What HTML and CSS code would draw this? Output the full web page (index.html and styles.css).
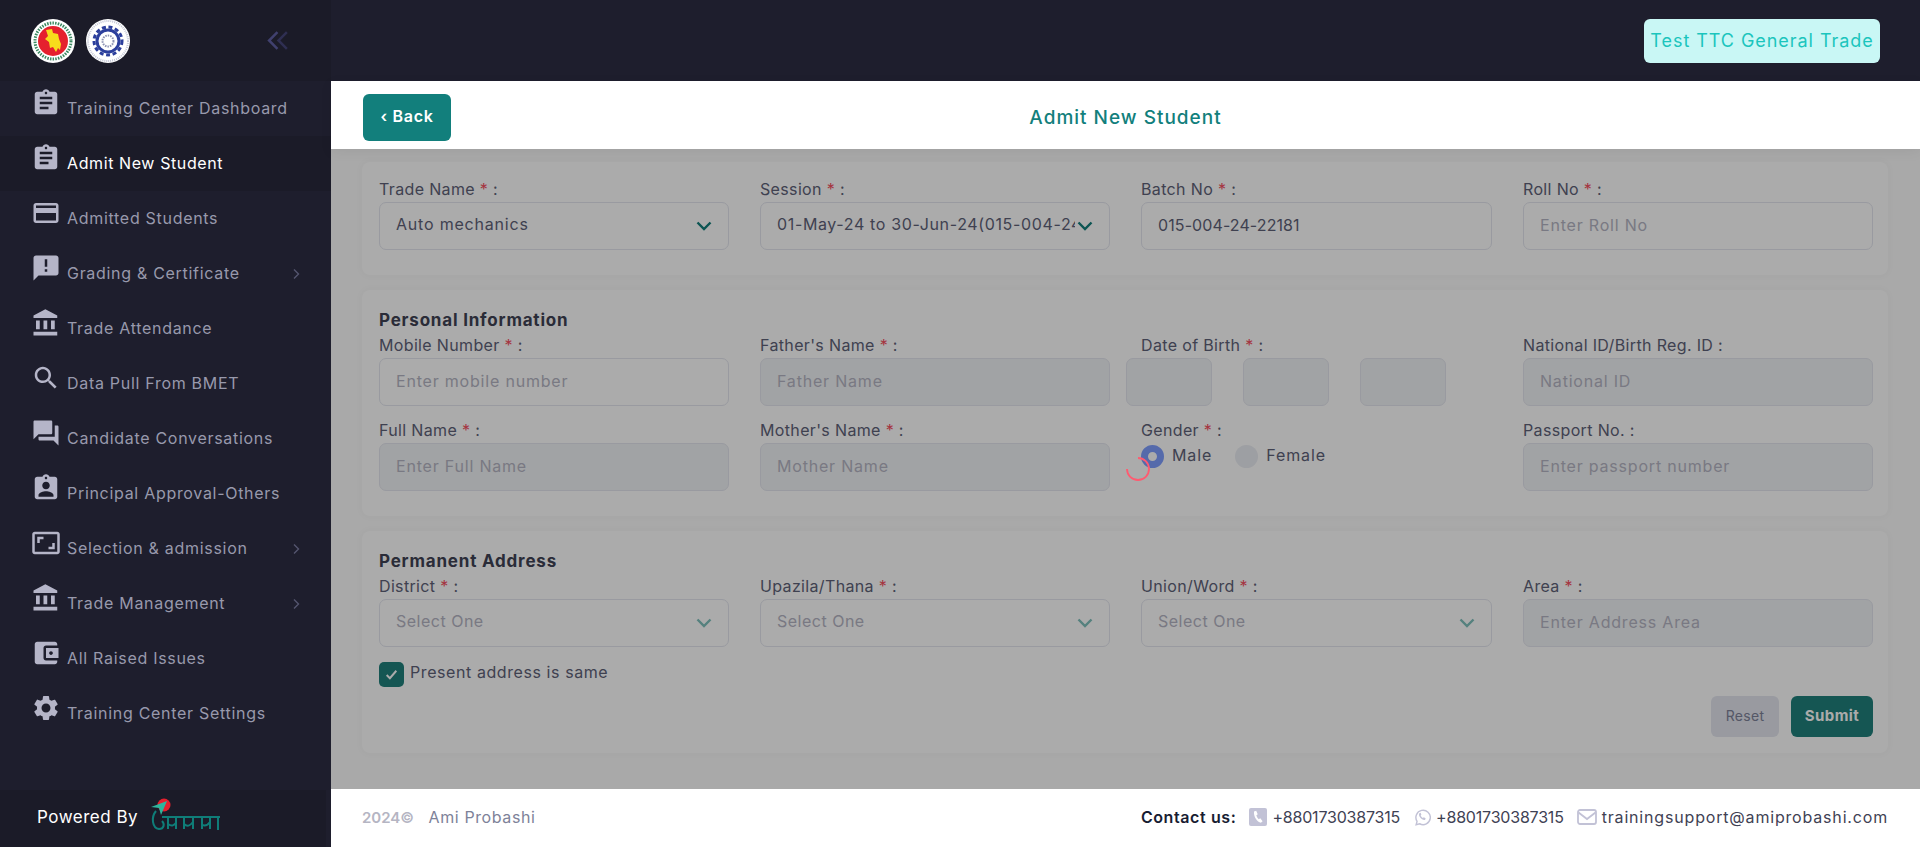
FILE: index.html
```html
<!DOCTYPE html>
<html lang="en">
<head>
    <meta charset="UTF-8">
    <meta name="viewport" content="width=device-width, initial-scale=1.0">
    <title>Admit New Student</title>
    <link rel="stylesheet" href="styles.css">
</head>
<body>
    <div class="app">
        <aside class="sidebar">
            <div class="brand">
                <svg class="seal" viewBox="0 0 44 44">
                    <circle cx="22" cy="22" r="22" fill="#fff"/>
                    <circle cx="22" cy="22" r="18" fill="none" stroke="#3c8a62" stroke-width="3" stroke-dasharray="1.5 1.2"/>
                    <circle cx="22" cy="22" r="15" fill="#e5202e"/>
                    <path d="M15 11l6-1 1 4 5 1 1 5 2 5-1 6-2-2-2 4-3-5-3 1-1-6-4-3 3-3z" fill="#f7dc1c"/>
                </svg>
                <svg class="seal" viewBox="0 0 44 44">
                    <circle cx="22" cy="22" r="22" fill="#fff"/>
                    <circle cx="22" cy="22" r="20" fill="none" stroke="#c3c6d6" stroke-width="2" stroke-dasharray="1 1"/>
                    <circle cx="22" cy="22" r="14" fill="none" stroke="#2c3f9c" stroke-width="3" stroke-dasharray="4 2.6"/>
                    <circle cx="22" cy="22" r="11" fill="none" stroke="#2c3f9c" stroke-width="3"/>
                    <circle cx="22" cy="22" r="5.5" fill="none" stroke="#8d93b3" stroke-width="2" stroke-dasharray="1.5 1"/>
                </svg>
                <svg class="collapse" viewBox="0 0 22 20">
                    <path d="M10 2L2 10l8 8" fill="none" stroke="#40406e" stroke-width="2.4"/>
                    <path d="M19 2l-8 8 8 8" fill="none" stroke="#2f2f52" stroke-width="2.4"/>
                </svg>
            </div>
            <nav class="menu">
                <a class="menu-item" href="#">
                    <svg class="menu-icon" viewBox="0 0 24 24"><path d="M19 3h-4.18C14.4 1.84 13.3 1 12 1c-1.3 0-2.4.84-2.82 2H5c-1.1 0-2 .9-2 2v14c0 1.1.9 2 2 2h14c1.1 0 2-.9 2-2V5c0-1.1-.9-2-2-2zm-7 0c.55 0 1 .45 1 1s-.45 1-1 1-1-.45-1-1 .45-1 1-1zm2 14H7v-2h7v2zm3-4H7v-2h10v2zm0-4H7V7h10v2z"/></svg>
                    <span>Training Center Dashboard</span>
                </a>
                <a class="menu-item active" href="#">
                    <svg class="menu-icon" viewBox="0 0 24 24"><path d="M19 3h-4.18C14.4 1.84 13.3 1 12 1c-1.3 0-2.4.84-2.82 2H5c-1.1 0-2 .9-2 2v14c0 1.1.9 2 2 2h14c1.1 0 2-.9 2-2V5c0-1.1-.9-2-2-2zm-7 0c.55 0 1 .45 1 1s-.45 1-1 1-1-.45-1-1 .45-1 1-1zm2 14H7v-2h7v2zm3-4H7v-2h10v2zm0-4H7V7h10v2z"/></svg>
                    <span>Admit New Student</span>
                </a>
                <a class="menu-item" href="#">
                    <svg class="menu-icon" viewBox="0 0 24 24"><path d="M20 4H4c-1.11 0-1.99.89-1.99 2L2 18c0 1.11.89 2 2 2h16c1.11 0 2-.89 2-2V6c0-1.11-.89-2-2-2zm0 14H4v-6h16v6zm0-10H4V6h16v2z"/></svg>
                    <span>Admitted Students</span>
                </a>
                <a class="menu-item" href="#">
                    <svg class="menu-icon" viewBox="0 0 24 24"><path d="M20 2H4c-1.1 0-1.99.9-1.99 2L2 22l4-4h14c1.1 0 2-.9 2-2V4c0-1.1-.9-2-2-2zm-7 9h-2V5h2v6zm0 4h-2v-2h2v2z"/></svg>
                    <span>Grading &amp; Certificate</span>
                    <svg class="menu-arrow" viewBox="0 0 8 12"><path d="M2 1.5L6.5 6 2 10.5"/></svg>
                </a>
                <a class="menu-item" href="#">
                    <svg class="menu-icon" viewBox="0 0 24 24"><path d="M4 10v7h3v-7H4zm6 0v7h3v-7h-3zM2 22h19v-3H2v3zm14-12v7h3v-7h-3zm-4.5-9L2 6v2h19V6l-9.5-5z"/></svg>
                    <span>Trade Attendance</span>
                </a>
                <a class="menu-item" href="#">
                    <svg class="menu-icon" viewBox="0 0 24 24"><path d="M15.5 14h-.79l-.28-.27C15.41 12.59 16 11.11 16 9.5 16 5.91 13.09 3 9.5 3S3 5.91 3 9.5 5.91 16 9.5 16c1.61 0 3.09-.59 4.23-1.57l.27.28v.79l5 4.99L20.49 19l-4.99-5zm-6 0C7.01 14 5 11.99 5 9.5S7.01 5 9.5 5 14 7.01 14 9.5 11.99 14 9.5 14z"/></svg>
                    <span>Data Pull From BMET</span>
                </a>
                <a class="menu-item" href="#">
                    <svg class="menu-icon" viewBox="0 0 24 24"><path d="M21 6h-2v9H6v2c0 .55.45 1 1 1h11l4 4V7c0-.55-.45-1-1-1zm-4 6V3c0-.55-.45-1-1-1H3c-.55 0-1 .45-1 1v14l4-4h10c.55 0 1-.45 1-1z"/></svg>
                    <span>Candidate Conversations</span>
                </a>
                <a class="menu-item" href="#">
                    <svg class="menu-icon" viewBox="0 0 24 24"><path d="M19 3h-4.18C14.4 1.84 13.3 1 12 1c-1.3 0-2.4.84-2.82 2H5c-1.1 0-2 .9-2 2v14c0 1.1.9 2 2 2h14c1.1 0 2-.9 2-2V5c0-1.1-.9-2-2-2zm-7 0c.55 0 1 .45 1 1s-.45 1-1 1-1-.45-1-1 .45-1 1-1zm0 4c1.66 0 3 1.34 3 3s-1.34 3-3 3-3-1.34-3-3 1.34-3 3-3zm6 12H6v-1.4c0-2 4-3.1 6-3.1s6 1.1 6 3.1V19z"/></svg>
                    <span>Principal Approval-Others</span>
                </a>
                <a class="menu-item" href="#">
                    <svg class="menu-icon" viewBox="0 0 24 24"><path d="M19 12h-2v3h-3v2h5v-5zM7 9h3V7H5v5h2V9zm14-6H3c-1.1 0-2 .9-2 2v14c0 1.1.9 2 2 2h18c1.1 0 2-.9 2-2V5c0-1.1-.9-2-2-2zm0 16.01H3V4.99h18v14.02z"/></svg>
                    <span>Selection &amp; admission</span>
                    <svg class="menu-arrow" viewBox="0 0 8 12"><path d="M2 1.5L6.5 6 2 10.5"/></svg>
                </a>
                <a class="menu-item" href="#">
                    <svg class="menu-icon" viewBox="0 0 24 24"><path d="M4 10v7h3v-7H4zm6 0v7h3v-7h-3zM2 22h19v-3H2v3zm14-12v7h3v-7h-3zm-4.5-9L2 6v2h19V6l-9.5-5z"/></svg>
                    <span>Trade Management</span>
                    <svg class="menu-arrow" viewBox="0 0 8 12"><path d="M2 1.5L6.5 6 2 10.5"/></svg>
                </a>
                <a class="menu-item" href="#">
                    <svg class="menu-icon" viewBox="0 0 24 24"><path d="M21 18v1c0 1.1-.9 2-2 2H5c-1.11 0-2-.9-2-2V5c0-1.1.89-2 2-2h14c1.1 0 2 .9 2 2v1h-9c-1.11 0-2 .9-2 2v8c0 1.1.89 2 2 2h9zm-9-2h10V8H12v8zm4-2.5c-.83 0-1.5-.67-1.5-1.5s.67-1.5 1.5-1.5 1.5.67 1.5 1.5-.67 1.5-1.5 1.5z"/></svg>
                    <span>All Raised Issues</span>
                </a>
                <a class="menu-item" href="#">
                    <svg class="menu-icon" viewBox="0 0 24 24"><path d="M19.14 12.94c.04-.3.06-.61.06-.94 0-.32-.02-.64-.07-.94l2.03-1.58c.18-.14.23-.41.12-.61l-1.92-3.32c-.12-.22-.37-.29-.59-.22l-2.39.96c-.5-.38-1.03-.7-1.62-.94l-.36-2.54c-.04-.24-.24-.41-.48-.41h-3.84c-.24 0-.43.17-.47.41l-.36 2.54c-.59.24-1.13.57-1.62.94l-2.39-.96c-.22-.08-.47 0-.59.22L2.74 8.87c-.12.21-.08.47.12.61l2.03 1.58c-.05.3-.09.63-.09.94s.02.64.07.94l-2.03 1.58c-.18.14-.23.41-.12.61l1.92 3.32c.12.22.37.29.59.22l2.39-.96c.5.38 1.03.7 1.62.94l.36 2.54c.05.24.24.41.48.41h3.84c.24 0 .44-.17.47-.41l.36-2.54c.59-.24 1.13-.56 1.62-.94l2.39.96c.22.08.47 0 .59-.22l1.92-3.32c.12-.22.07-.47-.12-.61l-2.01-1.58zM12 15.6c-1.98 0-3.6-1.62-3.6-3.6s1.62-3.6 3.6-3.6 3.6 1.62 3.6 3.6-1.62 3.6-3.6 3.6z"/></svg>
                    <span>Training Center Settings</span>
                </a>
            </nav>
            <div class="powered">
                <span>Powered By</span>
                <svg class="powered-logo" viewBox="0 0 70 38">
                    <circle cx="14" cy="7" r="6.5" fill="#e5202e"/>
                    <path d="M1 9l16-6-6 14-2-7z" fill="#2fb59d"/>
                    <g fill="none" stroke="#0f7d78" stroke-width="2">
                        <path d="M6 13c-5 6-4 17 3 18 5 0 6-5 3-8"/>
                        <path d="M12 19h58"/>
                        <path d="M18 19v12M26 19v12M34 19v12M43 19v12M52 19v12M60 19v12M68 19v13"/>
                        <path d="M18 26c4 3 6 1 8-1M34 26c3 3 6 2 9-2M52 27c3 1 6 0 8-3"/>
                    </g>
                </svg>
            </div>
        </aside>

        <div class="main">
            <header class="topbar">
                <div class="center-badge">Test TTC General Trade</div>
            </header>

            <div class="page-head">
                <a class="back-btn" href="#">&lsaquo; Back</a>
                <h1>Admit New Student</h1>
            </div>

            <main class="content">
                <section class="card">
                    <div class="form-grid">
                        <div class="field">
                            <label>Trade Name <i>*</i> :</label>
                            <div class="select-wrap">
                                <select class="control"><option>Auto mechanics</option></select>
                                <svg class="chevron" viewBox="0 0 16 10"><path d="M1.5 1.5L8 8l6.5-6.5"/></svg>
                            </div>
                        </div>
                        <div class="field">
                            <label>Session <i>*</i> :</label>
                            <div class="select-wrap">
                                <select class="control session"><option>01-May-24 to 30-Jun-24(015-004-24-22181)</option></select>
                                <svg class="chevron" viewBox="0 0 16 10"><path d="M1.5 1.5L8 8l6.5-6.5"/></svg>
                            </div>
                        </div>
                        <div class="field">
                            <label>Batch No <i>*</i> :</label>
                            <input class="control numeric" type="text" value="015-004-24-22181">
                        </div>
                        <div class="field">
                            <label>Roll No <i>*</i> :</label>
                            <input class="control" type="text" placeholder="Enter Roll No">
                        </div>
                    </div>
                </section>

                <section class="card">
                    <h2>Personal Information</h2>
                    <div class="form-grid">
                        <div class="field">
                            <label>Mobile Number <i>*</i> :</label>
                            <input class="control" type="text" placeholder="Enter mobile number">
                        </div>
                        <div class="field">
                            <label>Father's Name <i>*</i> :</label>
                            <input class="control locked" type="text" placeholder="Father Name">
                        </div>
                        <div class="field">
                            <label>Date of Birth <i>*</i> :</label>
                            <div class="dob">
                                <input class="control locked" type="text">
                                <input class="control locked" type="text">
                                <input class="control locked" type="text">
                            </div>
                        </div>
                        <div class="field">
                            <label>National ID/Birth Reg. ID :</label>
                            <input class="control locked" type="text" placeholder="National ID">
                        </div>
                        <div class="field">
                            <label>Full Name <i>*</i> :</label>
                            <input class="control locked" type="text" placeholder="Enter Full Name">
                        </div>
                        <div class="field">
                            <label>Mother's Name <i>*</i> :</label>
                            <input class="control locked" type="text" placeholder="Mother Name">
                        </div>
                        <div class="field">
                            <label>Gender <i>*</i> :</label>
                            <div class="radios">
                                <label class="radio"><input type="radio" name="gender" checked> Male</label>
                                <label class="radio"><input type="radio" name="gender"> Female</label>
                            </div>
                        </div>
                        <div class="field">
                            <label>Passport No. :</label>
                            <input class="control locked" type="text" placeholder="Enter passport number">
                        </div>
                    </div>
                </section>

                <section class="card">
                    <h2>Permanent Address</h2>
                    <div class="form-grid">
                        <div class="field">
                            <label>District <i>*</i> :</label>
                            <div class="select-wrap">
                                <select class="control empty"><option>Select One</option></select>
                                <svg class="chevron faint" viewBox="0 0 16 10"><path d="M1.5 1.5L8 8l6.5-6.5"/></svg>
                            </div>
                        </div>
                        <div class="field">
                            <label>Upazila/Thana <i>*</i> :</label>
                            <div class="select-wrap">
                                <select class="control empty"><option>Select One</option></select>
                                <svg class="chevron faint" viewBox="0 0 16 10"><path d="M1.5 1.5L8 8l6.5-6.5"/></svg>
                            </div>
                        </div>
                        <div class="field">
                            <label>Union/Word <i>*</i> :</label>
                            <div class="select-wrap">
                                <select class="control empty"><option>Select One</option></select>
                                <svg class="chevron faint" viewBox="0 0 16 10"><path d="M1.5 1.5L8 8l6.5-6.5"/></svg>
                            </div>
                        </div>
                        <div class="field">
                            <label>Area <i>*</i> :</label>
                            <input class="control locked" type="text" placeholder="Enter Address Area">
                        </div>
                    </div>
                    <label class="same-address">
                        <span class="checkbox">
                            <svg viewBox="0 0 14 14"><path d="M2.5 7.5L5.5 10.5 11.5 3.5"/></svg>
                        </span>
                        Present address is same
                    </label>
                    <div class="form-actions">
                        <button class="btn-reset" type="button">Reset</button>
                        <button class="btn-submit" type="button">Submit</button>
                    </div>
                </section>

                <div class="overlay"></div>
                <svg class="spinner" viewBox="0 0 26 26"><path d="M13 2a11 11 0 1 1-11 11"/></svg>
            </main>

            <footer class="footer">
                <div class="copy"><b>2024&copy;</b> <span>Ami Probashi</span></div>
                <div class="contact">
                    <b>Contact us:</b>
                    <span class="contact-item">
                        <svg class="contact-icon" viewBox="0 0 18 18"><rect width="18" height="18" rx="2" fill="#c2c2d6"/><path d="M5 3.5l2.2-.7 1.5 3.4-1.4 1.2c.5 1.500 1.300 2.800 2.400 3.800l1.600-.9 2.300 2.900-1.700 1.600c-3.700-.5-7.500-6.300-6.900-11.300z" fill="#fff"/></svg>
                        +8801730387315
                    </span>
                    <span class="contact-item">
                        <svg class="contact-icon" viewBox="0 0 18 20"><path d="M2.5 18.500l1-3.700A8 8 0 1 1 6.400 17.500z" fill="none" stroke="#c2c2d6" stroke-width="1.6"/><path d="M6.5 5.500c-1.500 1-1 3 .5 5s4 3.500 5.500 2.500l.5-1.500-2-1.200-1 .8c-1-.5-2-1.700-2.500-2.800l.8-.9-.8-2.100z" fill="#c2c2d6"/></svg>
                        +8801730387315
                    </span>
                    <span class="contact-item email">
                        <svg class="contact-icon mail" viewBox="0 0 20 16"><rect x="1" y="1" width="18" height="14" rx="2" fill="none" stroke="#c2c2d6" stroke-width="1.8"/><path d="M1.5 3.500L10 10l8.500-6.500" fill="none" stroke="#c2c2d6" stroke-width="1.8"/></svg>
                        trainingsupport@amiprobashi.com
                    </span>
                </div>
            </footer>
        </div>
    </div>
</body>
</html>
```

FILE: styles.css
```css
/* General */
* {
    box-sizing: border-box;
}

body {
    margin: 0;
    font-family: Inter, "Noto Sans", sans-serif;
    font-size: 16px;
    color: #3f4254;
    background-color: #fff;
}

.app {
    display: flex;
    height: 847px;
    overflow: hidden;
}

/* Sidebar */
.sidebar {
    width: 331px;
    flex-shrink: 0;
    display: flex;
    flex-direction: column;
    background-color: #1e1e2d;
}

.brand {
    height: 81px;
    padding-left: 31px;
    display: flex;
    align-items: center;
    gap: 11px;
    background-color: #1b1b28;
}

.seal {
    width: 44px;
    height: 44px;
}

.collapse {
    width: 23px;
    height: 21px;
    margin-left: 126px;
}

.menu {
    flex: 1;
}

.menu-item {
    height: 55px;
    padding: 7px 31px 0 31px;
    display: flex;
    align-items: flex-start;
    color: #9899ac;
    text-decoration: none;
    font-size: 16px;
    letter-spacing: 0.7px;
}

.menu-item.active {
    background-color: #1b1b28;
    color: #fff;
    letter-spacing: 0.6px;
}

.menu-item span {
    margin: 8px 0 0 6px;
    line-height: 24px;
}

.menu-icon {
    width: 30px;
    height: 30px;
    flex-shrink: 0;
    fill: #b5b5c8;
}

.menu-arrow {
    width: 8px;
    height: 12px;
    margin: 15px 0 0 auto;
    fill: none;
    stroke: #55566f;
    stroke-width: 1.4;
}

.powered {
    width: 326px;
    height: 57px;
    padding: 0 0 3px 37px;
    display: flex;
    align-items: center;
    gap: 12px;
    background-color: #1b1b28;
    color: #fff;
    font-size: 17px;
    letter-spacing: 0.5px;
}

.powered-logo {
    width: 70px;
    height: 38px;
}

/* Right side */
.main {
    flex: 1;
    display: flex;
    flex-direction: column;
    min-width: 0;
}

.topbar {
    height: 81px;
    padding: 19px 40px 0 0;
    display: flex;
    justify-content: flex-end;
    align-items: flex-start;
    background-color: #1e1e2d;
}

.center-badge {
    width: 236px;
    height: 44px;
    line-height: 44px;
    text-align: center;
    border-radius: 6px;
    background-color: #c9f7f5;
    color: #1bc5bd;
    font-size: 18px;
    letter-spacing: 0.95px;
    white-space: nowrap;
}

.page-head {
    position: relative;
    z-index: 1;
    height: 68px;
    padding: 13px 32px 0;
    display: grid;
    grid-template-columns: 1fr auto 1fr;
    align-items: start;
    background-color: #fff;
    box-shadow: 0 3px 12px rgba(0, 0, 0, 0.06);
}

.back-btn {
    width: 88px;
    height: 47px;
    line-height: 45px;
    text-align: center;
    border-radius: 6px;
    background-color: #127f7c;
    color: #fff;
    font-size: 16px;
    font-weight: 600;
    letter-spacing: 0.7px;
    text-decoration: none;
}

.page-head h1 {
    margin: 11px 0 0;
    color: #127f7c;
    font-size: 19px;
    font-weight: 500;
    letter-spacing: 1px;
    line-height: 26px;
}

/* Form area */
.content {
    position: relative;
    flex: 1;
    min-height: 0;
    padding: 13px 32px 0 31px;
    display: flex;
    flex-direction: column;
    gap: 15px;
    background-color: #fcfcfc;
}

.card {
    padding: 16px 15px 25px 17px;
    border-radius: 8px;
    background-color: #fff;
    box-shadow: 0 0 10px rgba(0, 0, 0, 0.03);
}

.card h2 {
    margin: 0;
    padding-top: 1px;
    color: #3f4254;
    font-size: 17px;
    font-weight: 700;
    letter-spacing: 0.8px;
    line-height: 26px;
    height: 28px;
}

.form-grid {
    display: grid;
    grid-template-columns: 350px 350px 351px 350px;
    column-gap: 31px;
    row-gap: 13px;
}

.field > label {
    display: block;
    height: 24px;
    line-height: 22px;
    color: #5e6278;
    font-size: 16px;
    letter-spacing: 0.35px;
}

.field i {
    color: #f64e60;
    font-style: normal;
}

.control {
    display: block;
    width: 100%;
    height: 48px;
    padding: 0 16px 2px;
    border: 1px solid #e4e6ef;
    border-radius: 7px;
    background-color: #fff;
    color: #5e6278;
    font-family: inherit;
    font-size: 16px;
    letter-spacing: 0.8px;
    outline: none;
    appearance: none;
}

.control::placeholder {
    color: #b5b5c3;
}

.control.locked {
    background-color: #f1f3f6;
}

.control.numeric {
    letter-spacing: 0.1px;
}

.control.session {
    letter-spacing: 0.64px;
}

.control.empty {
    color: #b5b5c3;
    letter-spacing: 0.5px;
}

.select-wrap {
    position: relative;
}

.select-wrap select {
    padding-right: 34px;
    padding-bottom: 4px;
}

.chevron {
    position: absolute;
    top: 19px;
    right: 17px;
    width: 16px;
    height: 10px;
    fill: none;
    stroke: #127f7c;
    stroke-width: 2.4;
    pointer-events: none;
}

.chevron.faint {
    stroke: #7fc0bc;
}

.dob {
    display: flex;
    gap: 31px;
    margin-left: -15px;
}

.dob .control {
    width: 86px;
}

.radios {
    display: flex;
    gap: 23px;
    padding-top: 2px;
}

.radio {
    display: flex;
    align-items: flex-start;
    gap: 8px;
    color: #5e6278;
    font-size: 16px;
    letter-spacing: 0.9px;
    line-height: 20px;
}

.radio input {
    width: 23px;
    height: 23px;
    margin: 0;
    border-radius: 50%;
    background-color: #ebedf3;
    appearance: none;
}

.radio input:checked {
    border: 7.5px solid #7f9fff;
    background-color: #fff;
}

.same-address {
    margin-top: 15px;
    display: flex;
    align-items: flex-start;
    gap: 6px;
    color: #5e6278;
    font-size: 16px;
    letter-spacing: 0.58px;
    line-height: 20px;
}

.checkbox {
    width: 25px;
    height: 25px;
    display: flex;
    align-items: center;
    justify-content: center;
    border-radius: 5px;
    background-color: #20807c;
}

.checkbox svg {
    width: 15px;
    height: 15px;
    fill: none;
    stroke: #fff;
    stroke-width: 1.8;
}

.form-actions {
    margin: 9px 0 -9px;
    display: flex;
    justify-content: flex-end;
    gap: 12px;
}

.form-actions button {
    height: 41px;
    padding: 0 0 2px;
    border: 0;
    border-radius: 6px;
    font-family: inherit;
}

.btn-reset {
    width: 68px;
    background-color: #e4e6ef;
    color: #7e8299;
    font-size: 14px;
    letter-spacing: 0.3px;
}

.btn-submit {
    width: 82px;
    background-color: #20807c;
    color: #fff;
    font-size: 15px;
    font-weight: 700;
    letter-spacing: 0.4px;
}

/* Loading layer over the form */
.overlay {
    position: absolute;
    inset: 0;
    background-color: rgba(0, 0, 0, 0.33);
}

.spinner {
    position: absolute;
    left: 794px;
    top: 307px;
    width: 26px;
    height: 26px;
    fill: none;
    stroke: #ff5a70;
    stroke-width: 1.8;
}

/* Footer */
.footer {
    height: 58px;
    padding: 0 32px 2px 31px;
    display: flex;
    justify-content: space-between;
    align-items: center;
    background-color: #fff;
    font-size: 16px;
}

.copy b {
    margin-right: 10px;
    color: #b5b5c3;
    font-size: 15px;
    font-weight: 600;
}

.copy span {
    color: #7e8299;
    letter-spacing: 0.6px;
}

.contact {
    display: flex;
    align-items: center;
    gap: 13px;
    color: #3f4254;
}

.contact b {
    color: #181c32;
    font-weight: 600;
    letter-spacing: 0.6px;
}

.contact-item {
    display: flex;
    align-items: center;
    gap: 5px;
    letter-spacing: -0.2px;
}

.contact-item.email {
    letter-spacing: 0.82px;
}

.contact-icon {
    width: 18px;
    height: 18px;
}

.contact-icon.mail {
    width: 20px;
    height: 16px;
}
```
